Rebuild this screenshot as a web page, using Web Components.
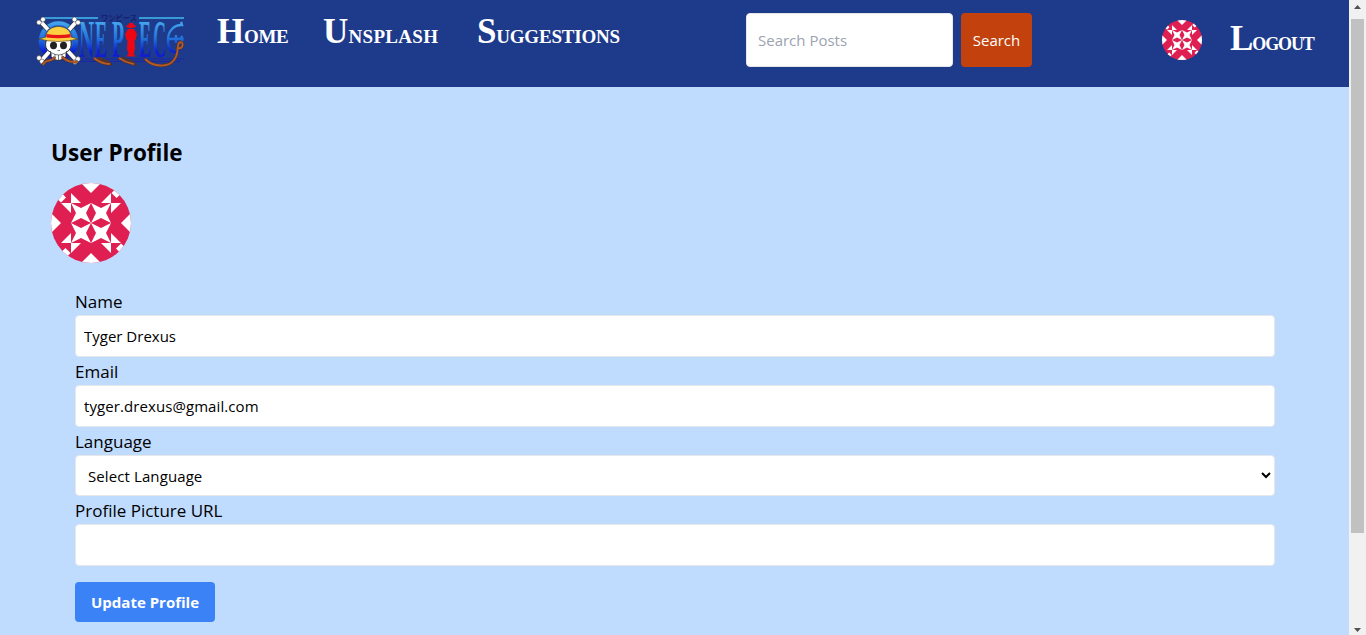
<!DOCTYPE html>
<html lang="en">
<head>
<meta charset="utf-8">
<title>User Profile</title>
<style>
html,body{margin:0;height:100%;overflow:hidden}
body{font-family:"Open Sans","Noto Sans",sans-serif;font-size:15px;line-height:24px;color:#000;background:#bfdbfe}
</style>
</head>
<body>
<profile-app></profile-app>
<script>
const define = (name, html) => customElements.define(name, class extends HTMLElement {
  constructor() {
    super();
    const t = document.createElement('template');
    t.innerHTML = html;
    this.attachShadow({mode: 'open'}).append(t.content.cloneNode(true));
  }
});

const quarter = '<path d="M0 0L-5-10L0-20L-10-15L-20-20L-15-10L-20 0L-10-5ZM-20-30L-10-20H-20ZM-30-20H-20V-10ZM-10-40H10L0-30ZM-36-26L-30-20.5L-25-25.5L-31-32Z"/>';
define('user-avatar', `<style>:host{display:block;width:80px;height:80px}svg{display:block;width:100%;height:100%;border-radius:50%}</style>
<svg viewBox="-40 -40 80 80"><rect x="-40" y="-40" width="80" height="80" fill="#df1f51"/><g fill="#fff">
${[0, 90, 180, 270].map(a => `<g transform="rotate(${a})">${quarter}</g>`).join('')}</g></svg>`);

define('brand-logo', `<style>:host{display:block;width:150px;height:56px}svg{display:block;overflow:visible}text{font-family:"Liberation Serif",serif}.jp{font-family:"Noto Sans CJK JP",sans-serif}</style>
<svg width="150" height="56" viewBox="36 12 150 56">
<defs><linearGradient id="b" gradientUnits="userSpaceOnUse" x1="0" y1="22" x2="0" y2="59"><stop stop-color="#43a5ef"/><stop offset=".45" stop-color="#2272dc"/><stop offset=".8" stop-color="#0b20d8"/><stop offset="1" stop-color="#1720b8"/></linearGradient></defs>
<path d="M43 18H98M139 18H184" stroke="#399bd5" stroke-width="2"/>
<path d="M80 59H184M80 61.5H180" stroke="#1d25a5" stroke-width="1.2"/>
<g fill="url(#b)" font-size="52" font-weight="700">
<text x="79" y="57" textLength="15" lengthAdjust="spacingAndGlyphs">N</text>
<text x="95" y="57" textLength="12" lengthAdjust="spacingAndGlyphs">E</text>
<text x="112" y="57" textLength="12" lengthAdjust="spacingAndGlyphs">P</text>
<text x="139" y="57" textLength="12" lengthAdjust="spacingAndGlyphs">E</text>
<text x="153" y="57" textLength="13" lengthAdjust="spacingAndGlyphs">C</text></g>
<text class="jp" x="101" y="20.7" font-size="8" font-weight="700" fill="#15206f" textLength="36" lengthAdjust="spacingAndGlyphs">ワンピース</text>
<path d="M181 22L182 25C172 25 168 33 168 40C168 50 173 55 180 50M168 39H181M176 35V43M181 36C184 39 182 43 178 43" fill="none" stroke="url(#b)" stroke-width="2.4"/>
<g fill="#ed0713"><ellipse cx="131" cy="26.3" rx="5" ry="1.3"/><circle cx="131" cy="25.5" r="2.8"/><path d="M128 29H134L137 34L135.500 40H134.500L135 49L133.500 54L136 56.500H126L128.500 54L127 49L127.500 40H126.500L125 34Z"/></g>
<circle cx="58.500" cy="41" r="17" fill="#1c50b8" stroke="url(#b)" stroke-width="5.500"/>
<path d="M41 22L77 61M77 21L41 61" stroke="#333" stroke-width="5"/><path d="M41 22L77 61M77 21L41 61" stroke="#fff" stroke-width="3.800"/>
<circle cx="58.500" cy="40" r="15" fill="#2565cc"/>
<g fill="#fff" stroke="#333" stroke-width=".5"><circle cx="39" cy="22.500" r="2.400"/><circle cx="43" cy="19.500" r="2.400"/><circle cx="74.500" cy="19.500" r="2.400"/><circle cx="78" cy="22.500" r="2.400"/><circle cx="39" cy="58" r="2.400"/><circle cx="42" cy="61.500" r="2.400"/><circle cx="75" cy="62" r="2.400"/><circle cx="78" cy="59" r="2.400"/></g>
<path d="M47 39C47 26 70 26 70 39C73 45 70 51 66 52V57Q58 64 51 57V52C46 51 44 45 47 39Z" fill="#fff" stroke="#262626"/>
<path d="M46 37C46 23 71 23 71 37L78 39Q58 44 39 39Z" fill="#ffcf42" stroke="#44391d" stroke-width=".6"/><path d="M46.500 34Q58 36 70.500 34V37.500Q58 39 46.500 37.500Z" fill="#e71616"/>
<ellipse cx="53.500" cy="45.500" rx="3.500" ry="3.700" fill="#222"/><ellipse cx="63.500" cy="45.500" rx="3.500" ry="3.700" fill="#222"/><path d="M57.500 50.500H60M52 53Q58.500 57 65 53M55 54V58M58.500 55V60M62 54V58" fill="none" stroke="#222" stroke-width=".6"/>
<path d="M43 65C45 58 51 63 55 57M62 57C68 62 71 62 78 62M94 58C99 62 103 64 110 64C107 60 102 61 98 58M119 58C126 63 129 63 134 64C131 60 125 60 122 58M145 59C153 67 168 68 174 60C180 52 176 46 179 43C184 39 184 50 178 48" fill="none" stroke="#553329" stroke-width="3"/><path d="M43 65C45 58 51 63 55 57M62 57C68 62 71 62 78 62M94 58C99 62 103 64 110 64M119 58C126 63 129 63 134 64M145 59C153 67 168 68 174 60C180 52 176 46 179 43C184 39 184 50 178 48" fill="none" stroke="#b65a25" stroke-width="1.800"/>
</svg>`);

define('nav-link', `<style>:host{display:block;color:#fff;font:700 19px/44px "Liberation Serif",serif;text-transform:uppercase;white-space:nowrap}
div::first-letter{font-size:35px}</style><div><slot></slot></div>`);

define('search-box', `<style>:host{display:flex;gap:8px}
input{box-sizing:border-box;width:207px;height:54px;border:1px solid #e5e7eb;border-radius:4px;padding:0 11px;font:inherit;background:#fff;outline:0}
input::placeholder{color:#9ca3af;opacity:1}
button{width:71px;height:54px;border:0;border-radius:4px;padding:0;background:#c2410c;color:#fff;font:inherit}</style>
<input placeholder="Search Posts"><button>Search</button>`);

define('top-nav', `<style>:host{display:flex;box-sizing:border-box;height:87px;background:#1e3a8a;padding:0 35px 0 36px;align-items:flex-start}
:host>*{flex-shrink:0}
brand-logo{margin-top:12px}nav{display:flex;margin:10px 0 0 31px}
.h{width:106px;letter-spacing:-.3px}.u{width:154px;letter-spacing:.3px}.s{width:269px;letter-spacing:-.2px}
search-box{margin-top:13px}user-avatar{width:40px;height:40px;margin:20px 0 0 130px}.l{margin:17px 0 0 28px;font-size:18px;letter-spacing:-1.1px}</style>
<brand-logo></brand-logo><nav><nav-link class="h">Home</nav-link><nav-link class="u">Unsplash</nav-link><nav-link class="s">Suggestions</nav-link></nav>
<search-box></search-box><user-avatar></user-avatar><nav-link class="l">Logout</nav-link>`);

define('form-field', `<style>:host{display:block}label{display:block;box-sizing:border-box;height:28px;padding-top:1px;font-size:17px;line-height:28px}
::slotted(input),::slotted(select){box-sizing:border-box;display:block;width:100%;height:42px;border:1px solid #e5e7eb;border-radius:4px;padding:8px;background:#fff;color:#000;font:inherit;outline:0;margin:0}
::slotted(select){height:41px;padding:7px 8px}</style>
<label><slot name="label"></slot></label><slot></slot>`);

define('profile-form', `<style>:host{display:block;padding:0 24px}
button{display:block;width:140px;height:40px;margin-top:16px;border:0;border-radius:4px;padding:0;background:#3b82f6;color:#fff;font:inherit;font-weight:700}</style>
<form-field><span slot="label">Name</span><input value="Tyger Drexus"></form-field>
<form-field><span slot="label">Email</span><input value="tyger.drexus@gmail.com" style="letter-spacing:.08px"></form-field>
<form-field><span slot="label">Language</span><select style="letter-spacing:.1px"><option>Select Language</option></select></form-field>
<form-field><span slot="label">Profile Picture URL</span><input></form-field>
<button>Update Profile</button>`);

define('scroll-rail', `<style>:host{display:flex;flex-direction:column;align-items:center;width:17px;height:635px;background:#f1f1f1}
i{width:13px;height:514px;background:#c1c1c1;margin-bottom:auto}svg{display:block}</style>
<svg width="17" height="19"><path d="M5 9L8.500 5L12 9Z" fill="#505050"/></svg><i></i><svg width="17" height="17"><path d="M5 10L8.500 14L12 10Z" fill="#505050"/></svg>`);

define('profile-app', `<style>:host{display:grid;grid-template-columns:minmax(0,1fr) 17px;height:635px;overflow:hidden}
main{padding:50px 50px 0 51px}h1{margin:0 0 14px;font-size:22.5px;line-height:32px;font-weight:700}user-avatar{margin-bottom:24px}</style>
<div><top-nav></top-nav><main><h1>User Profile</h1><user-avatar></user-avatar><profile-form></profile-form></main></div><scroll-rail></scroll-rail>`);
</script>
</body>
</html>
